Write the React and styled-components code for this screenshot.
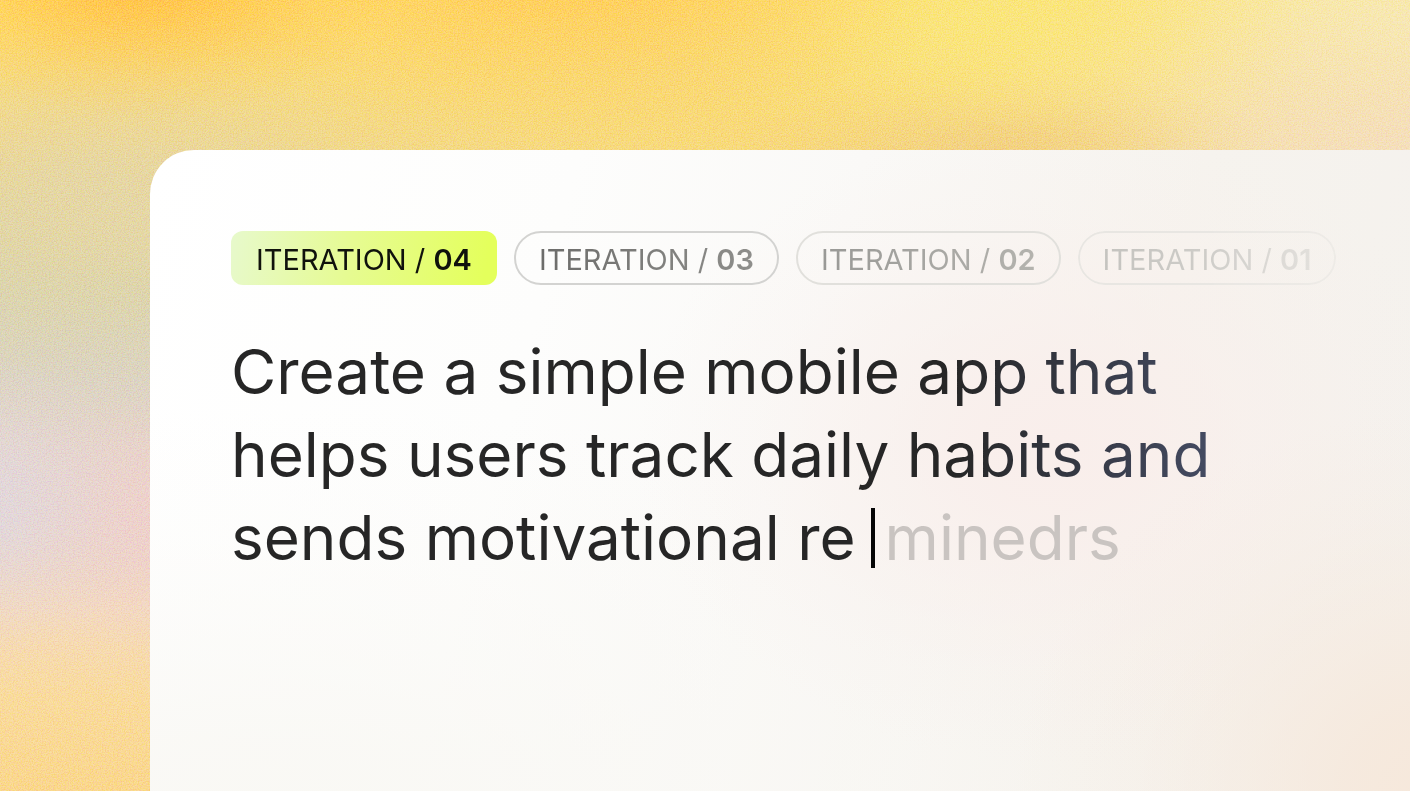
import React, { Fragment } from "react";
import styled, { createGlobalStyle, css } from "styled-components";

const GlobalStyle = createGlobalStyle`
  * { box-sizing: border-box; }
  body {
    margin: 0;
    font-family: Inter, "Liberation Sans", sans-serif;
    -webkit-font-smoothing: antialiased;
  }
`;

/* A soft light spot: an ellipse that eases out to nothing. */
const spot = (size, position, color) =>
  `radial-gradient(ellipse ${size} at ${position}, ${color}ff 0%, ${color}d8 20%, ${color}80 45%, ${color}30 72%, ${color}00 100%)`;

const Page = styled.div`
  position: relative;
  display: flex;
  min-height: 100vh;
  padding: 150px 0 0 150px;
  overflow: hidden;
  background:
    ${spot("260px 150px", "10% -4%", "#ffc145")},
    ${spot("420px 180px", "40% -6%", "#ffcd58")},
    ${spot("330px 170px", "70% 1%", "#fae67c")},
    ${spot("260px 90px", "71% 19%", "#f2cf82")},
    ${spot("480px 240px", "100% 21%", "#f5dfbd")},
    ${spot("600px 300px", "100% 3%", "#f8ecaf")},
    ${spot("700px 220px", "52% 12%", "#f9da78")},
    ${spot("190px 150px", "-2% 64%", "#e2d8dc")},
    ${spot("190px 130px", "12% 66%", "#efd1cb")},
    ${spot("420px 190px", "10% 25%", "#e6d7a6")},
    linear-gradient(180deg, #ffdf6c 0%, #fadc78 9%, #f3d98a 18%, #dfd6a5 27%, #d8d4b2 36%, #dcd4c2 47%, #e6d5cb 58%, #ebd5cb 66%, #f4dabf 77%, #f9db9e 88%, #fad78c 100%);
`;

const Grain = styled.svg`
  position: absolute;
  inset: 0;
  width: 100%;
  height: 100%;
  opacity: 0.4;
  mix-blend-mode: soft-light;
  pointer-events: none;
`;

const Card = styled.main`
  position: relative;
  flex: 1;
  min-width: 0;
  padding: 81px 72px 81px 81px;
  border-top-left-radius: 44px;
  background:
    ${spot("420px 380px", "102% 100%", "#f6e8db")},
    ${spot("420px 320px", "72% 46%", "#f9eeeb")},
    ${spot("1100px 420px", "10% 106%", "#f9f8f4")},
    linear-gradient(105deg, #ffffff 0%, #fdfdfc 30%, #faf9f7 50%, #f6f3ee 74%, #f4f1ed 100%);
`;

const Iterations = styled.nav`
  display: flex;
  gap: 17px;
`;

const tones = {
  active: css`
    border-color: transparent;
    border-radius: 12px;
    background: linear-gradient(100deg, #e7f9cc 0%, #e6fb92 45%, #e4ff5c 95%) border-box;
    --ink: #10120c, #10120c;
  `,
  recent: css`
    border-color: #d3d3d1;
    --ink: #6c6c6a, #8e8e8b;
  `,
  older: css`
    border-color: #e1e0dc;
    --ink: #999996, #b4b3ae;
  `,
  oldest: css`
    border-color: #e8e6e2;
    mask-image: linear-gradient(90deg, #000 50%, #0009);
    --ink: #c4c3bf, #d8d6d2;
  `,
};

const Pill = styled.button`
  height: 54px;
  padding: 4px 23px 0;
  border: 2px solid;
  border-radius: 27px;
  background: transparent;
  font: 400 29px/46px Inter, "Liberation Sans", sans-serif;
  white-space: nowrap;
  cursor: pointer;
  ${({ $tone }) => tones[$tone]}
`;

const PillLabel = styled.span`
  display: block;
  color: transparent;
  background: linear-gradient(90deg, var(--ink));
  background-clip: text;

  b { font-weight: 600; }
`;

const Prompt = styled.p`
  max-width: 1040px;
  margin: 45px 0 0;
  font-size: 62px;
  line-height: 83px;
`;

const Typed = styled.span`
  color: transparent;
  background: linear-gradient(90deg, #262626 720px, #444b62 980px);
  background-clip: text;
  box-decoration-break: clone;
`;

const Caret = styled.span`
  display: inline-block;
  width: 4px;
  height: 60px;
  margin: 0 10px 0 15px;
  background: #050505;
  vertical-align: -8px;
`;

const Suggestion = styled.span`
  color: #c9c4c1;
`;

const iterations = [
  { number: "04", tone: "active" },
  { number: "03", tone: "recent" },
  { number: "02", tone: "older" },
  { number: "01", tone: "oldest" },
];

const typedPhrases = [
  "Create a simple mobile app that",
  "helps users track daily habits and",
  "sends motivational re",
];

export default function App() {
  return (
    <>
      <GlobalStyle />
      <Page>
        <Grain aria-hidden="true">
          <filter id="grain" x="0" y="0" width="100%" height="100%" colorInterpolationFilters="sRGB">
            <feTurbulence type="fractalNoise" baseFrequency="0.75" numOctaves="3" />
            <feComponentTransfer>
              <feFuncR type="linear" slope="2.6" intercept="-0.76" />
              <feFuncG type="linear" slope="2.6" intercept="-0.76" />
              <feFuncB type="linear" slope="2.6" intercept="-0.76" />
              <feFuncA type="linear" slope="0" intercept="1" />
            </feComponentTransfer>
          </filter>
          <rect width="100%" height="100%" filter="url(#grain)" />
        </Grain>
        <Card>
          <Iterations aria-label="Iterations">
            {iterations.map(({ number, tone }) => (
              <Pill key={number} type="button" $tone={tone} aria-pressed={tone === "active"}>
                <PillLabel>
                  ITERATION / <b>{number}</b>
                </PillLabel>
              </Pill>
            ))}
          </Iterations>
          <Prompt>
            {typedPhrases.map((phrase, index) => (
              <Fragment key={phrase}>
                {index > 0 && " "}
                <Typed>{phrase}</Typed>
              </Fragment>
            ))}
            <Caret />
            <Suggestion>minedrs</Suggestion>
          </Prompt>
        </Card>
      </Page>
    </>
  );
}
